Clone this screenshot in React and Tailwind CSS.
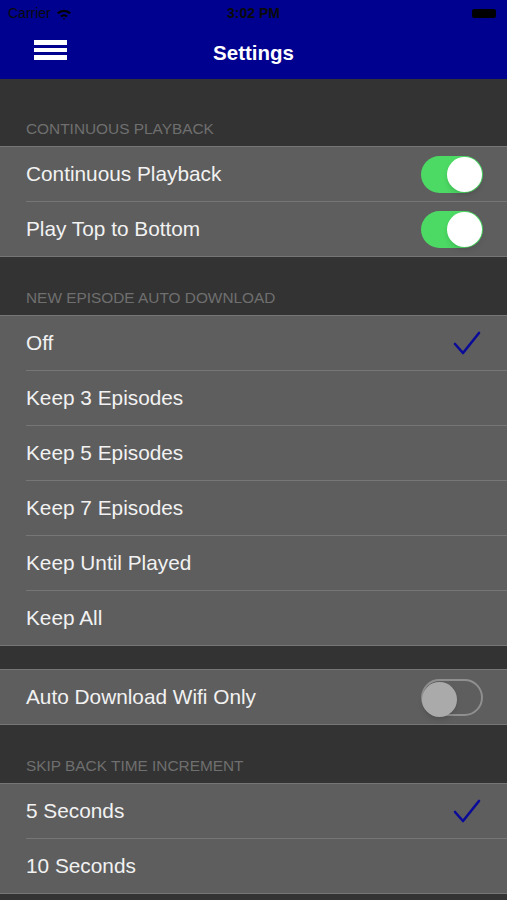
import React, { useState } from "react";

const font = { fontFamily: '"Liberation Sans", Arial, sans-serif' };

function Toggle({ on }) {
  return (
    <div
      className={`relative h-[37px] w-[62px] rounded-full ${
        on ? "bg-[#4cd964]" : "border-2 border-[#8f8f8f] bg-transparent"
      }`}
    >
      <div
        className={`absolute top-[1px] h-[35px] w-[35px] rounded-full ${
          on ? "right-[1px] bg-white shadow-md" : "left-[-1px] top-[-1px] bg-[#aaaaaa] shadow-md"
        }`}
      />
    </div>
  );
}

function Check() {
  return (
    <svg width="28" height="26" viewBox="0 0 28 26" className="mr-[2px]">
      <path
        d="M2 14 L10 23 L26 3"
        fill="none"
        stroke="#0b0b9a"
        strokeWidth="2.6"
        strokeLinecap="round"
        strokeLinejoin="round"
      />
    </svg>
  );
}

function Header({ children, top = "pt-[33px]" }) {
  return (
    <div className={`${top} pb-[10px] px-[26px] text-[15.4px] uppercase text-[#6f6f6f] leading-[15px]`}>
      {children}
    </div>
  );
}

function Group({ rows }) {
  return (
    <div className="border-t border-[#767676] bg-[#5e5e5e]">
      {rows.map((r, i) => {
        const last = i === rows.length - 1;
        return (
          <div key={r.label} className={`pl-[26px] ${last ? "border-b border-[#767676]" : ""}`}>
            <div
              className={`flex items-center justify-between pr-[24px] ${
                last ? "h-[54px]" : "h-[55px] border-b border-[#767676]"
              }`}
            >
              <span className="text-[20.8px] text-[#f2f2f2]">{r.label}</span>
              {r.toggle !== undefined && <Toggle on={r.toggle} />}
              {r.checked && <Check />}
            </div>
          </div>
        );
      })}
    </div>
  );
}

export default function App() {
  const [playback] = useState([
    { label: "Continuous Playback", toggle: true },
    { label: "Play Top to Bottom", toggle: true },
  ]);
  const episodes = [
    { label: "Off", checked: true },
    { label: "Keep 3 Episodes" },
    { label: "Keep 5 Episodes" },
    { label: "Keep 7 Episodes" },
    { label: "Keep Until Played" },
    { label: "Keep All" },
  ];
  const skip = [{ label: "5 Seconds", checked: true }, { label: "10 Seconds" }];

  return (
    <div className="h-[900px] w-[507px] overflow-hidden bg-[#333333]" style={font}>
      <div className="bg-[#01018f]">
        <div className="relative flex h-[27px] items-center px-[8px] text-[14px] text-[#0a0a0a]">
          <span>Carrier</span>
          <svg width="16" height="12" viewBox="0 0 16 12" className="ml-[5px]">
            <path d="M1 4.5 A10 10 0 0 1 15 4.5 L13.3 6.2 A7.6 7.6 0 0 0 2.7 6.2 Z" fill="#000" />
            <path d="M4.2 7.7 A5.4 5.4 0 0 1 11.8 7.7 L10.1 9.4 A3 3 0 0 0 5.9 9.4 Z" fill="#000" />
            <path d="M6.8 10.6 A1.8 1.8 0 0 1 9.2 10.6 L8 11.8 Z" fill="#000" />
          </svg>
          <span className="absolute left-1/2 -translate-x-1/2 font-bold">3:02 PM</span>
          <div className="ml-auto mr-[3px] h-[9px] w-[24px] rounded-[2px] bg-black" />
        </div>
        <div className="relative flex h-[52px] items-center justify-center">
          <div className="absolute left-[34px] top-[13px] flex w-[33px] flex-col gap-[3px]">
            <div className="h-[4.5px] bg-white" />
            <div className="h-[4.5px] bg-white" />
            <div className="h-[4.5px] bg-white" />
          </div>
          <span className="text-[20.5px] font-bold text-white">Settings</span>
        </div>
      </div>

      <Header top="pt-[42px]">Continuous Playback</Header>
      <Group rows={playback} />
      <Header>New Episode Auto Download</Header>
      <Group rows={episodes} />
      <div className="h-[23px]" />
      <Group rows={[{ label: "Auto Download Wifi Only", toggle: false }]} />
      <Header>Skip Back Time Increment</Header>
      <Group rows={skip} />
    </div>
  );
}
